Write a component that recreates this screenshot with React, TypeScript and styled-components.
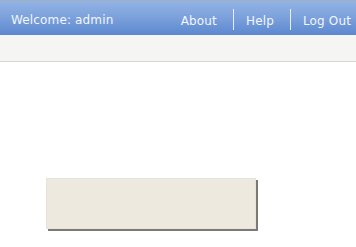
import styled, { createGlobalStyle } from 'styled-components';

const GlobalStyle = createGlobalStyle`
  html, body {
    margin: 0;
    padding: 0;
    background: #ffffff;
  }
`;

const Page = styled.div`
  width: 356px;
  height: 247px;
  overflow: hidden;
  font-family: 'DejaVu Sans', Verdana, sans-serif;
`;

const TopBar = styled.header`
  box-sizing: border-box;
  height: 35px;
  border-top: 1px solid #a3aec2;
  background: linear-gradient(to bottom, #92b3e4 0%, #7ba0db 50%, #5b88cf 100%);
  display: flex;
  align-items: center;
  justify-content: space-between;
  padding: 4px 5px 0 11px;
  color: #f2f6fd;
  font-size: 12px;
`;

const Welcome = styled.span`
  letter-spacing: 0.15px;
`;

const Nav = styled.nav`
  display: flex;
  align-items: center;
  margin-top: -2px;
`;

const NavLink = styled.a<{ $divider?: boolean }>`
  color: #f2f6fd;
  text-decoration: none;
  padding: 0 ${p => (p.$divider ? 16 : 0)}px 0 12px;
  line-height: 21px;
  border-right: ${p => (p.$divider ? '1px solid #e8effb' : 'none')};
  letter-spacing: 0.15px;

  span {
    position: relative;
    top: 2px;
  }
`;

const SubBar = styled.div`
  height: 26px;
  background: #f5f6f4;
  border-bottom: 1px solid #d6d6d6;
`;

const Content = styled.main`
  padding: 116px 0 0 46px;
`;

const Panel = styled.div`
  width: 208px;
  height: 49px;
  background: #ede9df;
  border: 1px solid #e6e3da;
  box-shadow: 2px 2px 0 #7c7a74;
`;

export default function App() {
  return (
    <Page>
      <GlobalStyle />
      <TopBar>
        <Welcome>Welcome: admin</Welcome>
        <Nav>
          <NavLink $divider><span>About</span></NavLink>
          <NavLink $divider><span>Help</span></NavLink>
          <NavLink><span>Log Out</span></NavLink>
        </Nav>
      </TopBar>
      <SubBar />
      <Content>
        <Panel />
      </Content>
    </Page>
  );
}
